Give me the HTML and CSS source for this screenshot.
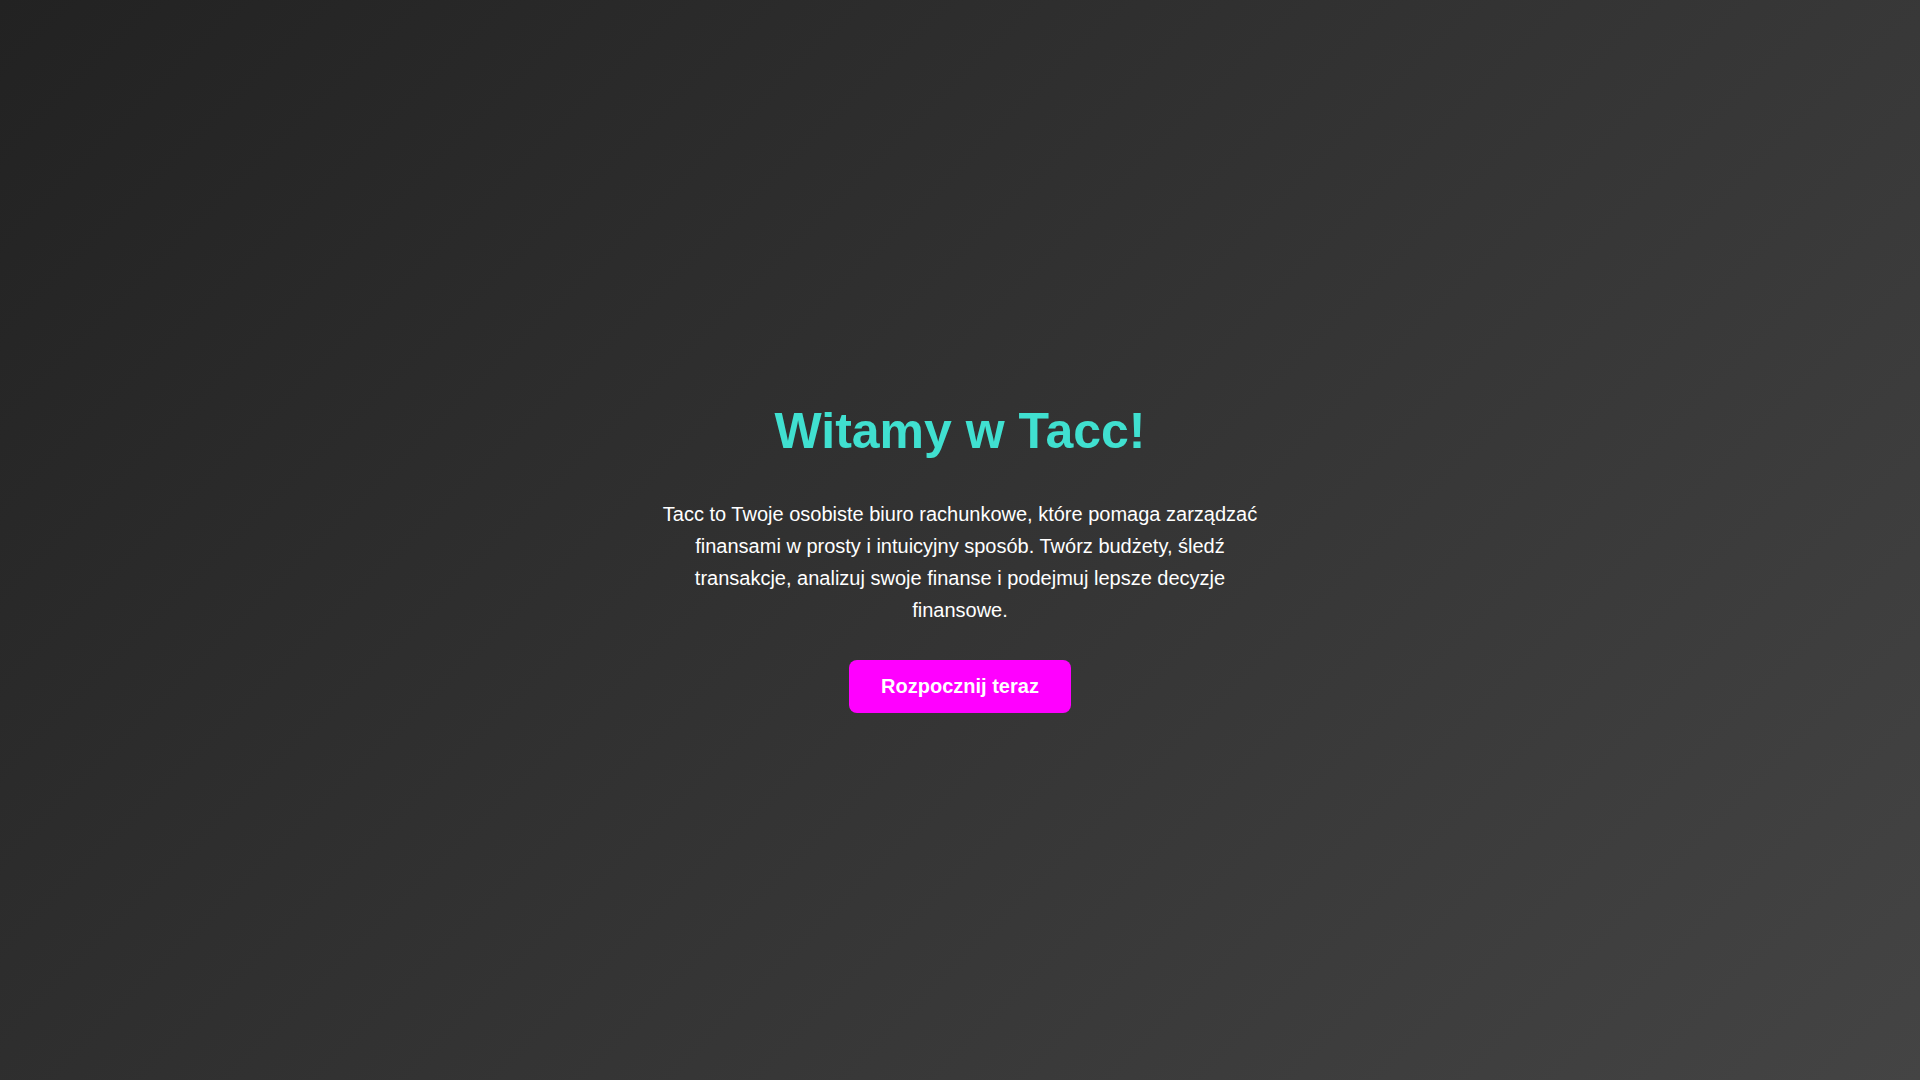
FILE: index.html
```html
<!DOCTYPE html>
<html lang="pl">
<head>
<meta charset="utf-8">
<title>Tacc</title>
<link rel="stylesheet" href="styles.css">
</head>
<body>
<main class="hero">
  <h1 class="hero-title">Witamy w Tacc!</h1>
  <p class="hero-text">Tacc to Twoje osobiste biuro rachunkowe, które pomaga zarządzać finansami w prosty i intuicyjny sposób. Twórz budżety, śledź transakcje, analizuj swoje finanse i podejmuj lepsze decyzje finansowe.</p>
  <button class="hero-button" type="button">Rozpocznij teraz</button>
</main>
</body>
</html>
```
FILE: styles.css
```css
html, body {
  margin: 0;
  padding: 0;
  height: 100%;
}
body {
  font-family: "Liberation Sans", Arial, sans-serif;
  background: linear-gradient(135deg, #222222 0%, #444444 100%);
  color: #ffffff;
  display: flex;
  align-items: center;
  justify-content: center;
  min-height: 100vh;
}
.hero {
  display: flex;
  flex-direction: column;
  align-items: center;
  text-align: center;
  max-width: 610px;
  padding-top: 34px;
}
.hero-title {
  font-size: 50px;
  font-weight: bold;
  color: #40e0d0;
  margin: 0 0 38px 0;
}
.hero-text {
  font-size: 20px;
  line-height: 32px;
  margin: 0 0 34px 0;
}
.hero-button {
  font-family: "Liberation Sans", Arial, sans-serif;
  font-size: 20px;
  font-weight: bold;
  color: #ffffff;
  background: #ff00ff;
  border: none;
  border-radius: 8px;
  padding: 15px 32px;
  cursor: pointer;
}
```
